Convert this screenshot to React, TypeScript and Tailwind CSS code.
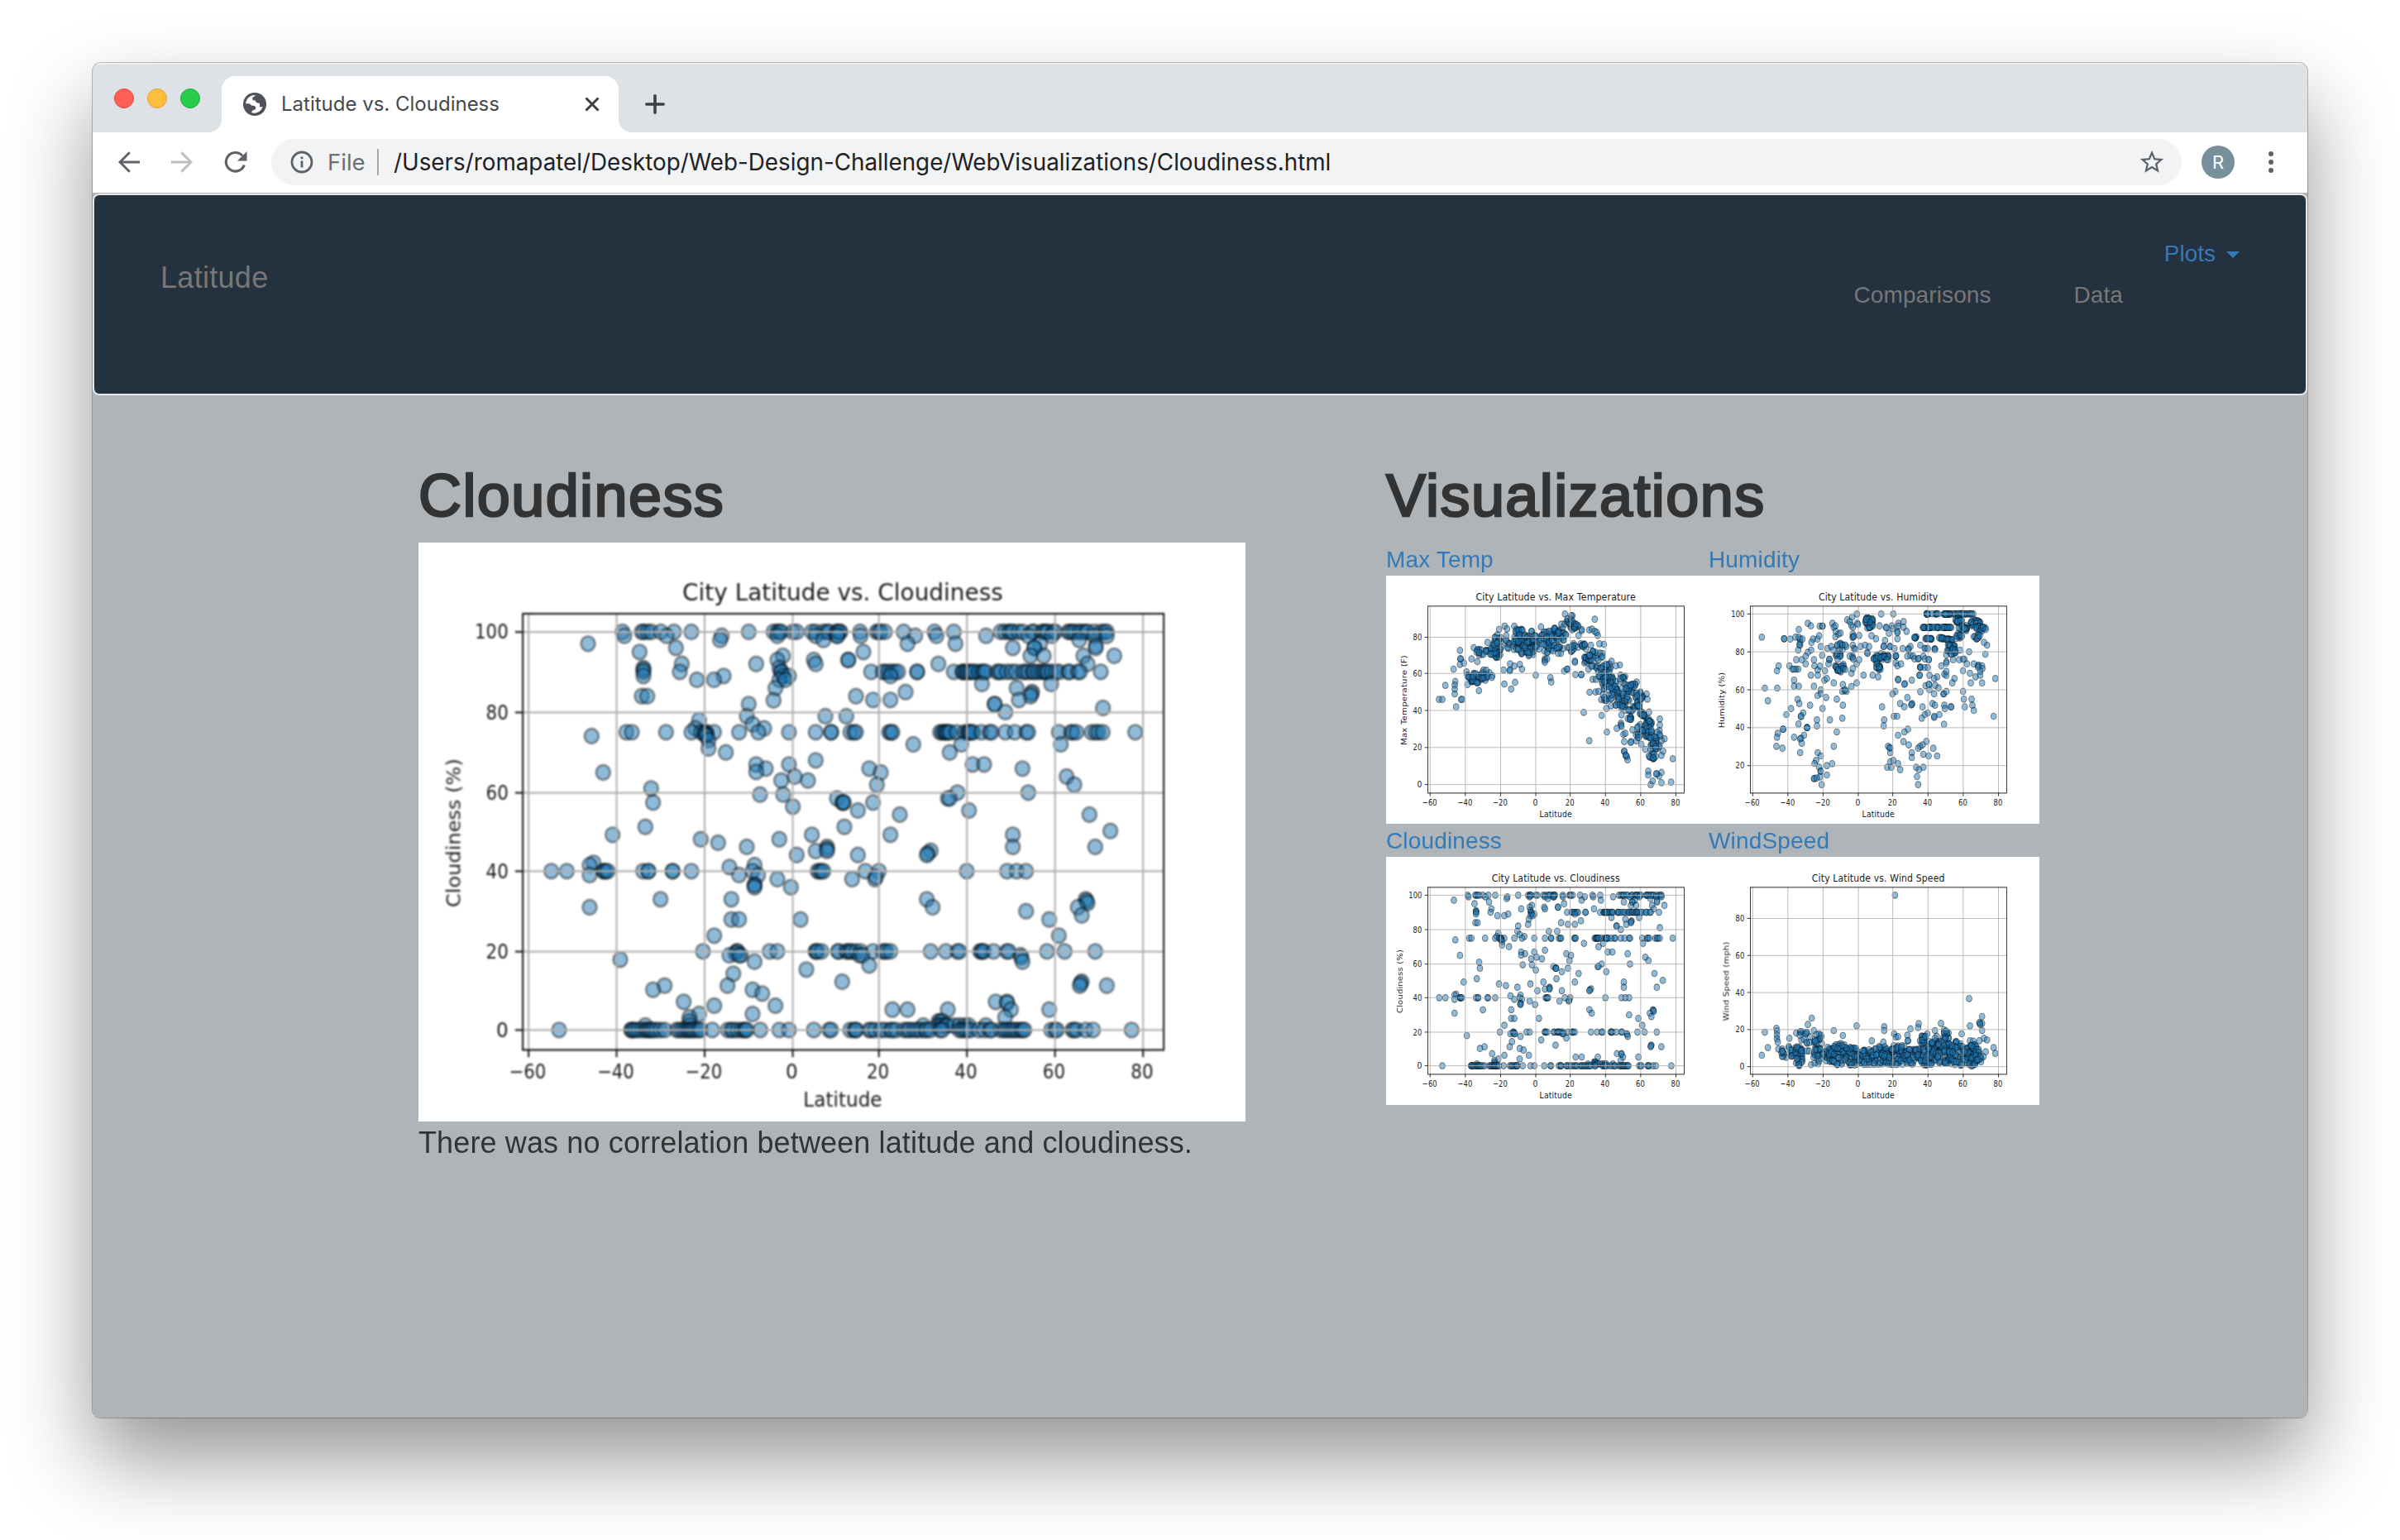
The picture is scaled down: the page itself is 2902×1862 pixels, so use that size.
import React from "react";

type Marker = [number, number];

/* Rows are written "y: x x x"; every row becomes one marker per x. */
function rows(src: string, dx: number, dy: number): Marker[] {
  return src
    .trim()
    .split("\n")
    .flatMap((line) => {
      const [y, xs] = line.split(":");
      return xs
        .trim()
        .split(/\s+/)
        .map((x) => [Number(x) + dx, Number(y) + dy] as Marker);
    });
}

function pairs(src: string): Marker[] {
  return src
    .trim()
    .split(/[;\s]+/)
    .filter(Boolean)
    .map((p) => p.split(",").map(Number) as Marker);
}

/* Fills an ellipse with n markers; entries are cx,cy,rx,ry,n. */
function clusters(src: string, maxY = 10000, density = 1, stretch = 1): Marker[] {
  let seed = 7;
  const rnd = () => {
    seed = (seed * 16807) % 2147483647;
    return seed / 2147483647;
  };
  return src
    .trim()
    .split(/[;\s]+/)
    .filter(Boolean)
    .flatMap((c) => {
      const [cx, cy, rx, ry, n] = c.split(",").map(Number);
      return Array.from({ length: Math.round(n * density) }, () => {
        const a = rnd() * Math.PI * 2;
        const r = Math.sqrt(rnd());
        return [
          cx + Math.cos(a) * r * rx,
          Math.min(maxY - rnd() * 8, cy + Math.sin(a) * r * ry * stretch),
        ] as Marker;
      });
    });
}

const cloudMarkers: Marker[] = [
  ...rows(
    `342: 758 828 835 849 862 897 945 1008 1216 1306 1320 1327 1334 1376 1390 1445 1459 1487 1500 1508 1536 1549
356: 765 918 1118 1320 1459 1536
371: 1112 1487
385: 633
400: 952
415: 820
429: 1340
444: 1320 1452 1577
458: 973 1243 1459
473: 834 1327
480: 834
487: 834 966 1334 1334
502: 834 1125 1341 1362
516: 1028 1090 1327 1348
546: 1313
575: 828 848
590: 1306
604: 1216
648: 1209 1494
662: 1036
677: 1230
692: 1022 1272
706: 772 792 916 1008 1043 1056 1063 1090 1181 1251 1362 1459 1515
713: 1063 1056
720: 646 1063
735: 1070
765: 1070
779: 1133
808: 1459
823: 1243 1362
838: 1278
850: 1243
852: 688
867: 1383
881: 1334 1431
910: 862
932: 1257 1341
946: 1536
961: 869 1555
976: 1376
1049: 841`,
    -18,
    -18
  ),
  ...rows(
    `342: 7 15 90 150 158 165 180 248 360 430 600 615 630 637 644 665 680 715 720 750 757 764 771 790 798 845 852 860 870 885 895 908 915 940 965 978 985
356: 8 92 290 367 547 700 785 940 985
371: 885
385: 262 436 743
392: 945
400: 644 722 722 945
415: 102
429: 708 756 900 1012
444: 47
458: 374 915
487: 130 172 180 193 205 218 228 297 297 430 462 462 470 476 483 490 497 504 520 532 539 545 587 594 601 622 640 655 680 690 700 715 722 735 748 757 764 771 785 800 812 845 850 880 888 963
502: 200
531: 532 783
546: 658
560: 255 714
567: 711
575: 75 708
589: 137 200 666
604: 578 578
618: 971
633: 617
648: 40
706: -15 55 68 75 195 202 207 380 388 395 402 402 410 416 440 470 480 487 487 494 500 530 560 567 617 651 693 700 811 855 862 875 930 945 955 970 1088
750: 283 457 818
779: 415
823: 498 540
838: 123 679
852: 165
867: 839
896: 151 867
925: 443 700
946: 408 415
961: 30 30 137
990: 82 485
1005: 234 922
1049: 33`,
    1512,
    -18
  ),
  ...rows(
    `28: 722 1445
44: 1042 1327
57: 1105
72: 1209 1500
80: 1500
87: 1459 1500
101: 1390
130: 653
138: 639 1237
145: 1146
160: 500 556 690 690 697 704 833 852 852 940 940 1008 1230 1466 1473 1480 1487
174: 639 1181 1250
189: 1320
210: 1237 1237
218: 1369 1237
262: 896 1153
291: 639
335: 1153 1181 1404
394: 1091
451: 1050 1174 1174 1292 1320 1459 1459 1466 1480 1542
458: 1167
465: 1146 1188 1181
481: 750
488: 1237
517: 1425
532: 1160
561: 1555
575: 911 1139
590: 869 1230
604: 1265
634: 980
648: 1091 1313
678: 1230 1036
690: 1001
705: 1001
720: 1001 841
736: 528 790 790 797 804 815 828 841 848 855 862 870 880 895 911 955 965 975 985 994 1001 1008 1015 1025 1035 1042 1084 1140 1153 1160 1175 1190 1202 1202 1209 1258 1327 1362 1452 1508`,
    -18,
    1032
  ),
  ...rows(
    `14: 998
28: 200 644
72: 644 943
86: 346
95: 335
101: 82 332
160: 109 158 477 623 658 692
189: 61 144
180: 148
262: 332 908
268: 912
276: 915
291: 353 880
305: 692
320: 894
335: 776
394: 811
451: 10 40 46 55 60 75 92 137 172 180 186 200 346 401 443 450 525 532 532 539 574 622 629 768 832 943
465: 88 98 672
473: 675
488: 679
502: 123
561: 894
567: 890
575: 887 985
634: 582 623
638: 623
662: 207 262 408 637 776
690: 616
705: 374 381 388
720: 319 375 388 400 408 430 450 470 484 546
736: -15 54 68 75 75 123 130 144 165 180 200 207 220 250 262 270 285 297 310 325 332 345 380 388 450 460 470 480 490 520 540 560 567 600 612 620 630 640 650 660 672 680 686 783 797 804 860 866 875 908 935 1075`,
    1512,
    1032
  ),
].map(([x, y]) => [(x / 3000) * 432, (y / 2100) * 288]);

const place = (pts: Marker[], ox: number, oy: number): Marker[] =>
  pts.map(([x, y]) => [((x - ox) / 1200) * 432, ((y - oy) / 900) * 288]);

const tempMarkers = place(
  [
    ...pairs(`697,577;724,583;720,583;805,596;478,621;513,621;610,624;487,631;458,633;484,655;366,699;316,709;416,680;318,740;318,740;316,760;330,755;358,740;379,750;293,777;340,787;263,836;240,887;252,887;299,822;297,835;297,850;297,867;302,914;320,887;324,887;385,855;343,833;477,831;502,849;516,825;498,758;513,766;533,760;541,777;497,783;474,780;497,780;591,799;644,808;647,824;694,784;707,777;704,777;733,748;733,752;735,797;756,797;756,797;765,934;785,1037;786,861;808,860;819,858;782,777;797,814;809,814;830,945;849,1005;838,687;822,685;816,655;833,720;791,690;773,704;785,635;795,632;805,640;812,644;757,638;758,633;746,655;577,640;575,640;866,748;896,762;882,765;915,803;957,824;993,867;996,886;1002,933;1041,958;1041,980;1040,1000;1058,1030;1088,1102;1082,1187;1047,1152;1047,1189;1008,1196;1015,1183;1038,1165;1030,1157;1028,1157;999,1147;999,1161;1053,1075;1047,1090;1017,1103;1019,1100;1008,1097;988,1068;974,1050;956,1037;937,1040;935,1043;912,1040;911,1075;913,1075;917,1090;922,1095;924,1106;918,1090;909,1014;916,1010;900,973;900,980;902,985;885,992;942,997;902,943;847,920;864,910;829,888;840,890;624,740;623,745;632,740;624,752;682,720;690,703`),
    ...clusters(`375,808,38,18,45;415,795,22,18,10;395,715,25,10,16;445,715,22,20,32;452,680,18,25,22;480,690,20,20,8;530,640,14,10,14;540,685,35,35,55;575,700,30,30,35;595,665,15,15,8;625,680,18,40,28;665,645,28,18,25;660,695,30,25,18;685,660,20,20,12;705,615,30,12,12;730,625,16,20,20;715,600,10,12,6;720,700,20,16,12;755,692,18,8,10;775,745,18,12,14;805,730,28,18,22;810,770,18,12,8;845,790,28,35,35;855,830,30,25,35;875,850,15,12,15;905,810,15,14,8;850,875,20,16,12;900,890,30,30,35;930,845,30,18,25;965,880,16,22,20;935,920,22,10,10;970,920,15,15,8;930,955,10,6,8;975,950,12,15,10;1000,970,15,14,18;975,1005,25,25,25;1010,1015,14,20,14;1035,1030,14,25,12;1020,1060,18,14,16;1013,1092,14,10,8`, 10000, 0.85, 1.1),
  ],
  48,
  438
);

const humidityMarkers = place(
  [
    ...pairs(`211,661;222,846;233,892;266,783;272,765;267,846;292,667;292,667;314,668;333,661;345,633;378,611;389,620;421,621;431,621;431,621;467,611;472,625;478,620;343,708;350,690;350,680;350,668;345,661;358,668;347,688;378,716;390,708;370,730;356,743;336,743;343,777;335,777;322,777;311,765;328,777;370,758;400,743;402,765;414,780;422,766;440,783;430,727;425,695;397,668;391,680;413,668;419,656;449,702;463,695;470,708;456,743;456,741;453,758;389,799;414,799;438,817;447,811;328,817;328,839;345,839;400,839;472,827;341,887;347,902;317,920;300,942;361,936;353,950;353,947;344,976;411,961;411,983;458,961;444,880;431,920;425,852;425,866;413,873;386,908;483,886;505,908;503,955;483,1005;472,1057;289,995;288,995;375,989;375,989;375,990;269,1010;266,1024;328,1024;364,1017;353,1028;350,1030;356,1046;264,1057;286,1064;350,1080;414,1080;425,1092;408,1108;402,1119;419,1133;425,1147;424,1148;422,1168;402,1174;400,1174;410,1172;428,1196;447,1127;466,1120;447,1161;505,833;503,858;511,855;518,858;514,852;536,840;555,827;580,799;613,799;633,805;536,792;541,775;555,758;564,743;556,577;539,588;521,598;530,605;536,618;557,611;560,615;541,625;541,650;541,661;541,661;545,658;564,655;541,690;569,695;586,690;600,695;594,716;594,720;545,702;550,705;540,730;540,735;530,730;542,740;644,577;688,577;725,605;706,611;683,620;706,621;725,625;736,640;703,640;703,645;703,667;672,647;658,673;625,667;609,656;638,620;661,626;663,626;686,630;653,695;653,695;675,695;677,695;692,702;722,702;744,702;750,695;786,690;742,705;805,702;802,702;813,702;839,704;838,704;839,706;697,730;697,730;698,728;750,728;760,730;739,730;765,740;778,740;780,738;797,730;816,742;817,743;803,740;697,755;703,765;716,758;785,770;786,770;787,771;802,771;813,771;783,799;784,799;819,799;847,805;836,811;755,817;705,814;706,816;730,830;728,832;695,858;685,867;739,880;713,902;728,914;755,905;756,902;753,907;647,914;655,961;653,983;690,948;702,948;794,914;786,859;805,837;817,832;818,833;819,852;840,836;852,845;836,867;870,867;871,867;881,858;873,908;875,920;897,914;898,914;830,902;839,908;813,936;802,942;791,955;836,952;837,948;855,942;872,977;833,1064;847,1092;816,1092;797,1086;808,1039;794,1052;785,1057;778,1064;741,995;728,1005;705,1017;725,1040;744,1052;755,1080;755,1098;669,1057;677,1064;677,1080;675,1062;688,1108;677,1113;666,1133;681,1133;705,1120;713,1142;771,1133;797,1133;781,1142;774,1167;778,1196;910,811;902,827;873,795;880,800;880,785;862,765;881,750;880,755;1058,811;1052,948;1010,827;1003,799;986,805;966,792;969,827;941,783;941,858;944,886;947,914;972,886;975,908;980,927;1022,723;1028,690;1017,680;963,714;930,708;927,743;941,741;946,741;955,758;980,758;995,765;997,762;1010,765;1011,775;1003,785;996,770;905,743;880,725`),
    ...clusters(`500,695,18,14,10;495,770,22,18,20;485,730,15,12,8;490,650,18,14,4;600,608,16,22,28;635,765,12,16,12;645,735,32,14,28;930,577,52,1,28;880,577,12,1,12;810,577,6,1,6;840,577,18,1,6;805,626,12,1,6;820,626,6,1,8;845,626,15,1,7;880,626,20,1,14;770,662,8,3,6;818,667,15,2,10;862,665,12,3,9;890,670,12,6,10;925,660,14,14,12;925,600,12,10,14;945,628,20,10,16;985,610,20,12,22;1005,630,20,12,16;990,660,16,10,9;895,700,20,14,20;905,715,10,12,10`),
  ],
  18,
  438
);

const windMarkers = place(
  [
    ...pairs(`694,247;963,622;392,693;378,716;472,738;555,721;505,756;655,724;655,738;336,747;311,766;222,744;233,800;211,828;264,730;266,740;266,755;266,768;269,780;271,805;285,805;300,835;610,775;652,780;691,750;697,762;705,760;739,755;750,732;778,727;780,713;861,712;872,735;839,738;936,750;966,721;1010,687;1010,712;1002,712;1000,709;1003,716;1010,738;1017,766;1028,772;1052,800;1058,821;1023,815;400,738;386,760;811,750;785,775;791,758;741,775;741,775;728,795;1000,775;966,775`),
    ...clusters(
      `287,822,6,10,10;330,810,25,25,20;345,830,15,30,45;360,755,15,15,10;378,745,8,3,3;400,800,35,25,28;415,770,15,20,16;400,850,20,12,5;445,830,35,30,45;485,830,35,30,60;540,835,30,30,60;495,800,25,15,25;590,835,35,25,55;640,830,40,30,75;700,835,45,28,75;705,800,25,15,15;760,835,40,25,65;810,820,35,40,85;800,770,20,15,12;840,785,15,30,15;870,820,35,35,90;880,755,12,15,18;920,825,30,40,70;970,830,30,35,90;980,795,15,15,15;1000,830,20,25,20`,
      868,
      0.72,
      1.25
    ),
  ],
  18,
  108
);

type Plot = {
  title: string;
  titleLength: number;
  yLabel: string;
  yLabelLength: number;
  yLabelX: number;
  yTicks: [string, number][];
  markers: Marker[];
};

const cloudiness: Plot = {
  title: "City Latitude vs. Cloudiness",
  titleLength: 167.5,
  yLabel: "Cloudiness (%)",
  yLabelLength: 74,
  yLabelX: 21.8,
  yTicks: [["0", 242.5], ["20", 203.5], ["40", 163.5], ["60", 124.5], ["80", 84.5], ["100", 44.5]],
  markers: cloudMarkers,
};
const maxTemp: Plot = {
  title: "City Latitude vs. Max Temperature",
  titleLength: 209,
  yLabel: "Max Temperature (F)",
  yLabelLength: 104.6,
  yLabelX: 27,
  yTicks: [["0", 242.5], ["20", 199.5], ["40", 156.5], ["60", 113.5], ["80", 71.5]],
  markers: tempMarkers,
};
const humidity: Plot = {
  title: "City Latitude vs. Humidity",
  titleLength: 156,
  yLabel: "Humidity (%)",
  yLabelLength: 65,
  yLabelX: 21,
  yTicks: [["20", 220.5], ["40", 176.5], ["60", 132.5], ["80", 88.5], ["100", 44.5]],
  markers: humidityMarkers,
};
const windSpeed: Plot = {
  title: "City Latitude vs. Wind Speed",
  titleLength: 173.5,
  yLabel: "Wind Speed (mph)",
  yLabelLength: 92,
  yLabelX: 26.6,
  yTicks: [["0", 243.5], ["20", 200.5], ["40", 157.5], ["60", 114.5], ["80", 71.5]],
  markers: windMarkers,
};

const xTicks: [string, number][] = [
  ["−60", 57.5], ["−40", 103.5], ["−20", 149.5], ["0", 195.5],
  ["20", 240.5], ["40", 286.5], ["60", 332.5], ["80", 378.5],
];

function Scatter({ plot, className, soft }: { plot: Plot; className: string; soft?: boolean }) {
  return (
    <svg
      viewBox="0 0 432 288"
      preserveAspectRatio="none"
      className={className}
      fontFamily='"DejaVu Sans", sans-serif'
      fontSize={10}
      fill="#1a1a1a"
    >
      <rect width="432" height="288" fill="#fff" />
      <g className={soft ? "blur-[0.35px]" : undefined}>
        <g fill="#1f77b4" fillOpacity={0.5} stroke="#000" strokeOpacity={0.46} strokeWidth={1}>
          {plot.markers.map(([x, y], i) => (
            <circle key={i} cx={x} cy={y} r={3.7} />
          ))}
        </g>
        <g stroke="#b0b0b0" strokeWidth={0.9}>
          {xTicks.map(([t, x]) => (
            <line key={t} x1={x} x2={x} y1={35} y2={252} />
          ))}
          {plot.yTicks.map(([t, y]) => (
            <line key={t} x1={54} x2={388.800} y1={y} y2={y} />
          ))}
        </g>
        <g stroke="#1a1a1a" strokeWidth={0.9} fill="none">
          {xTicks.map(([t, x]) => (
            <line key={t} x1={x} x2={x} y1={252} y2={256} />
          ))}
          {plot.yTicks.map(([t, y]) => (
            <line key={t} x1={50.5} x2={54} y1={y} y2={y} />
          ))}
          <rect x={54.5} y={35.4} width={334.8} height={217} />
        </g>
        {xTicks.map(([t, x]) => (
          <text
            key={t}
            x={x - 0.5}
            y={266.7}
            textAnchor="middle"
            textLength={t.length === 3 ? 19.4 : t.length === 2 ? 11.8 : undefined}
            lengthAdjust="spacingAndGlyphs"
          >
            {t}
          </text>
        ))}
        {plot.yTicks.map(([t, y]) => (
          <text
            key={t}
            x={47}
            y={y + 3.4}
            textAnchor="end"
            textLength={t.length === 3 ? 17.6 : t.length === 2 ? 11.8 : undefined}
            lengthAdjust="spacingAndGlyphs"
          >
            {t}
          </text>
        ))}
        <text x={221.6} y={280.8} textAnchor="middle">
          Latitude
        </text>
        <text x={221.6} y={29} fontSize={12} textAnchor="middle" textLength={plot.titleLength} lengthAdjust="spacingAndGlyphs">
          {plot.title}
        </text>
        <text
          transform={`translate(${plot.yLabelX} 144.5) rotate(-90)`}
          textAnchor="middle"
          textLength={plot.yLabelLength}
          lengthAdjust="spacingAndGlyphs"
        >
          {plot.yLabel}
        </text>
      </g>
    </svg>
  );
}

function TabStrip() {
  return (
    <div className="flex h-[84px] items-start bg-[#dee1e6] shadow-[inset_0_2px_0_#eceef1]">
      <div className="ml-[26px] mt-[31px] flex gap-4">
        <span className="size-6 rounded-full border border-[#e2463f] bg-[#ff5f57]" />
        <span className="size-6 rounded-full border border-[#e1a32e] bg-[#ffbd3e]" />
        <span className="size-6 rounded-full border border-[#1aab37] bg-[#29cc4b]" />
      </div>
      <svg viewBox="0 0 16 16" className="ml-[10px] mt-[68px] size-4 shrink-0">
        <path d="M16 0v16H0A16 16 0 0 0 16 0Z" fill="#fff" />
      </svg>
      <div className="mt-4 flex h-[68px] w-[480px] items-center rounded-t-2xl bg-white pl-[26px] pr-[23px]">
        <svg viewBox="0 0 28 28" className="size-7 shrink-0">
          <circle cx="14" cy="14" r="14" fill="#4f5359" />
          <path
            d="M15.300 3.100c-1.500 1.800-3.400 2-4 3.600-.5 1.600.5 2.600 2.400 2.600 1.500 0 1.300 1.900 2.400 2.600 1.200.8 3.100.2 3.900 1.500.6 1.200-.5 2.700.2 3.600.8.9 2.200.2 3.500.1-1.400 4.400-5.200 7.600-9.700 7.600-1.400 0-2.700-.2-3.900-.8l1.100-2.200 3-1.100c1.300-.6 1.400-2.500.6-3.600-.9-1.200-2.800-.9-4.200-1.400-1.600-.6-2.200-2.200-3.900-2.400H3.200C3.400 7.600 8.200 3 14 3Z"
            fill="#fff"
          />
        </svg>
        <span className="ml-[18px] flex-1 whitespace-nowrap text-[24px] leading-8 text-[#45494d]">Latitude vs. Cloudiness</span>
        <svg viewBox="0 0 18 18" className="size-[18px] shrink-0" stroke="#3c4043" strokeWidth="3">
          <path d="M1.500 1.500l15 15M16.500 1.500l-15 15" />
        </svg>
      </div>
      <svg viewBox="0 0 16 16" className="mt-[68px] size-4 shrink-0">
        <path d="M0 0v16h16A16 16 0 0 1 0 0Z" fill="#fff" />
      </svg>
      <svg viewBox="0 0 24 24" className="ml-4 mt-[38px] size-6 shrink-0" stroke="#3c4043" strokeWidth="3.600" strokeLinecap="round">
        <path d="M12 1.800v20.400M1.800 12h20.400" />
      </svg>
    </div>
  );
}

function Toolbar() {
  return (
    <div className="flex h-[73px] items-start bg-white pt-2">
      <div className="flex h-14 items-center">
        <svg viewBox="0 0 26 26" className="ml-[31px] size-[26px]" fill="none" stroke="#5f6368" strokeWidth="3">
          <path d="M26 13H2.500M13.800 1.200L2 13l11.800 11.800" />
        </svg>
        <svg viewBox="0 0 26 26" className="ml-[38px] size-[26px]" fill="none" stroke="#bcbec1" strokeWidth="3">
          <path d="M0 13h23.500M12.200 1.200L24 13 12.200 24.800" />
        </svg>
        <svg viewBox="0 0 28 28" className="ml-[38px] size-[28px]">
          <path d="M24.300 17.500A11.300 11.300 0 1 1 22 6.200" fill="none" stroke="#5f6368" strokeWidth="3.200" />
          <path d="M27.500 1v11.500H16Z" fill="#5f6368" />
        </svg>
      </div>
      <div className="ml-[29px] flex h-14 w-[2310px] items-center rounded-full bg-[#f1f3f4] pl-[23px] pr-[19px]">
        <svg viewBox="0 0 28 28" className="size-7 shrink-0" fill="none" stroke="#5f6368">
          <circle cx="14" cy="14" r="12" strokeWidth="2.800" />
          <path d="M14 12.500v8" strokeWidth="2.800" />
          <path d="M14 7.500v2.800" strokeWidth="2.800" />
        </svg>
        <span className="ml-[17px] w-[60px] text-[27.5px] leading-9 text-[#6b6f74]">File</span>
        <span className="h-8 w-[2px] bg-[#a5a8ac]" />
        <span className="ml-[18px] flex-1 whitespace-nowrap text-[27.8px] leading-9 text-[#202124]">
          /Users/romapatel/Desktop/Web-Design-Challenge/WebVisualizations/Cloudiness.html
        </span>
        <svg viewBox="0 0 24 24" className="size-[34px]" fill="#5f6368">
          <path d="M22 9.240l-7.190-.62L12 2 9.190 8.630 2 9.240l5.460 4.730L5.820 21 12 17.270 18.180 21l-1.630-7.030L22 9.240zM12 15.400l-3.760 2.270 1-4.280-3.320-2.880 4.380-.38L12 6.100l1.710 4.040 4.380.38-3.320 2.880 1 4.280L12 15.400z" />
        </svg>
      </div>
      <div className="ml-6 mt-2 flex size-10 items-center justify-center rounded-full bg-[#78909c] text-[22px] text-white">R</div>
      <div className="ml-[41px] mt-[15px] flex flex-col gap-1">
        <span className="size-1.5 rounded-full bg-[#5f6368]" />
        <span className="size-1.5 rounded-full bg-[#5f6368]" />
        <span className="size-1.5 rounded-full bg-[#5f6368]" />
      </div>
    </div>
  );
}

function Navbar() {
  return (
    <nav className="flex h-[244px] items-start justify-between rounded-lg border-2 border-[#e7e7e7] bg-[#24313f] pl-20 pr-20 text-[28px] leading-10 text-[#777]">
      <a className="mt-20 text-[36px] leading-10 tracking-[0.3px]">Latitude</a>
      <div className="flex items-start">
        <a className="mt-[101px] tracking-[0.1px]">Comparisons</a>
        <a className="ml-[100px] mt-[101px]">Data</a>
        <a className="ml-[50px] mt-[51px] flex items-center text-[#337ab7]">
          Plots
          <svg viewBox="0 0 16 8" className="ml-[13px] mt-[1px] h-2 w-4" fill="#337ab7">
            <path d="M0 0h16L8 8Z" />
          </svg>
        </a>
      </div>
    </nav>
  );
}

function Thumb({ label, plot }: { label: string; plot: Plot }) {
  return (
    <a className="block w-[390px] text-[28px] leading-[42px] tracking-[0.15px] text-[#337ab7]">
      <span className="block h-10">{label}</span>
      <Scatter plot={plot} className="block h-[300px] w-[400px] max-w-none" />
    </a>
  );
}

export default function App() {
  const heading =
    "mb-[18px] text-[72px] leading-[78px] tracking-[1.4px] [-webkit-text-stroke:2.6px_#333]";
  return (
    <div className="h-[1862px] w-[2902px] overflow-hidden bg-white px-28 pt-[76px] font-['Inter',sans-serif]">
      <div className="h-[1638px] w-[2678px] rounded-[10px] shadow-[0_0_0_1px_rgba(0,0,0,0.25),0_50px_100px_rgba(0,0,0,0.42)]">
        <div className="h-full overflow-hidden rounded-[10px] bg-[#afb4b8]">
          <TabStrip />
          <Toolbar />
          <div className="h-px bg-[#b1b3b5]" />
          <div className="font-['Liberation_Sans',Arial,sans-serif] text-[#333]">
            <Navbar />
            <main className="flex pl-[394px] pt-[82px]">
              <section className="w-[1000px]">
                <h1 className={heading}>Cloudiness</h1>
                <Scatter plot={cloudiness} soft className="block h-[700px] w-[1000px]" />
                <p className="whitespace-nowrap text-[36px] leading-[52px] tracking-[0.13px]">
                  There was no correlation between latitude and cloudiness.
                </p>
              </section>
              <section className="ml-[170px] w-[790px]">
                <h1 className={heading}>Visualizations</h1>
                <div className="grid grid-cols-[390px_390px]">
                  <Thumb label="Max Temp" plot={maxTemp} />
                  <Thumb label="Humidity" plot={humidity} />
                  <Thumb label="Cloudiness" plot={cloudiness} />
                  <Thumb label="WindSpeed" plot={windSpeed} />
                </div>
              </section>
            </main>
          </div>
        </div>
      </div>
    </div>
  );
}
